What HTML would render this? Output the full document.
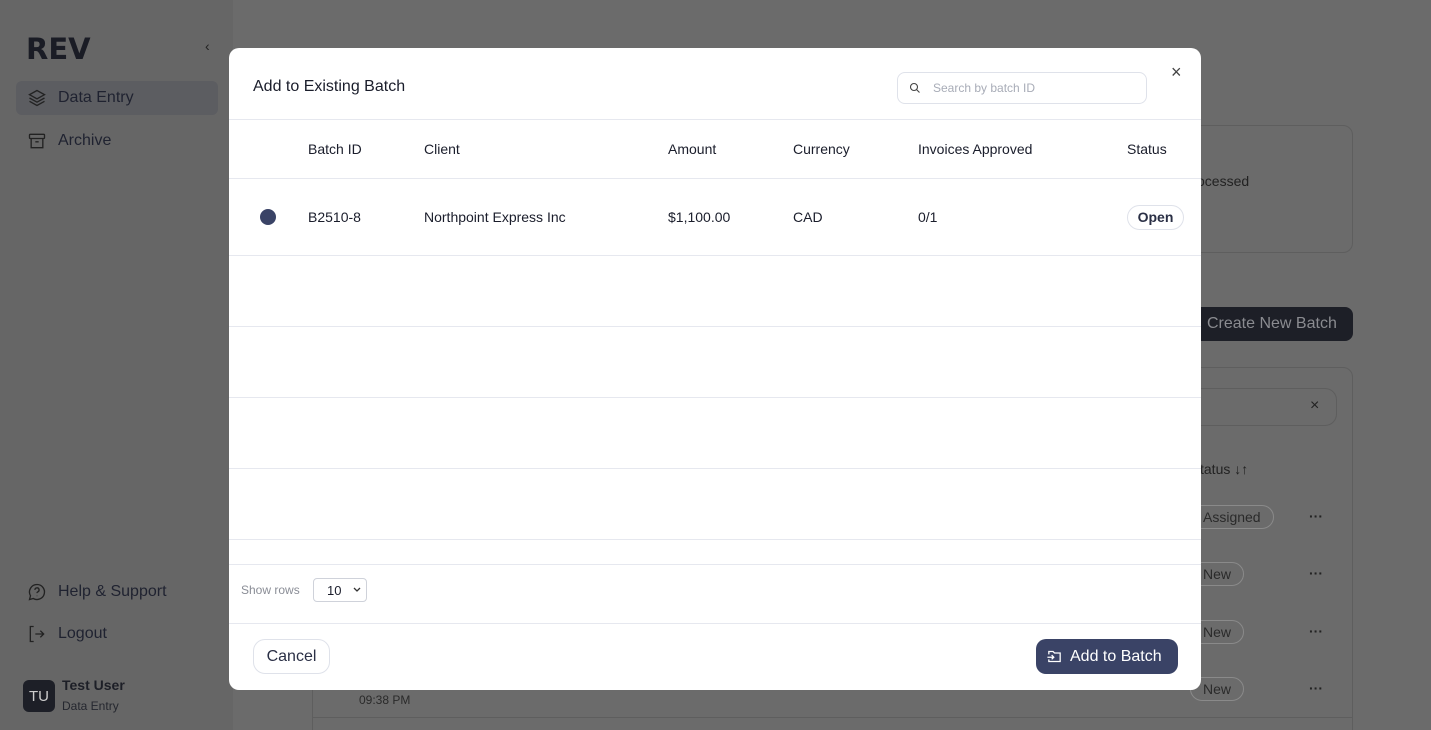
<!DOCTYPE html>
<html><head><meta charset="utf-8"><style>
*{box-sizing:border-box;margin:0;padding:0}
html,body{width:1431px;height:730px;overflow:hidden}
body{font-family:"Liberation Sans",Arial,sans-serif;background:#6b6b6b;position:relative;color:#1a1d2b}
.side{position:absolute;left:0;top:0;width:233px;height:730px;background:#666}
.abs{position:absolute}
.nav{position:absolute;left:16px;width:202px;height:34px;border-radius:6px;font-size:16px;color:#1f2230;display:flex;align-items:center;padding-left:42px}
.modal{position:absolute;left:229px;top:48px;width:972px;height:642px;background:#fff;border-radius:10px;overflow:hidden}
.hl{position:absolute;left:0;right:0;height:1px;background:#e6e8ef}
.th{position:absolute;top:93px;font-size:14px;color:#1a1d2b}
.td{position:absolute;top:161px;font-size:14px;color:#1a1d2b}
.pill{position:absolute;border:1px solid #8a8a8a;border-radius:14px;font-size:14px;color:#2a2a2a;padding:3px 12px}
</style></head><body>
<div class="side">
  <div class="abs" style="left:26px;top:32px;font-size:29px;font-weight:bold;letter-spacing:0px;color:#1a1c25;font-family:'DejaVu Sans',sans-serif">REV</div>
  <div class="abs" style="left:205px;top:38px;font-size:14px;color:#222">‹</div>
  <div class="nav" style="top:81px;background:#5c5d61">Data Entry</div>
  <svg class="abs" style="left:27px;top:88px" width="20" height="20" viewBox="0 0 24 24" fill="none" stroke="#222" stroke-width="1.6"><path d="M12 3 3 8l9 5 9-5z"/><path d="m3 12 9 5 9-5"/><path d="m3 16 9 5 9-5"/></svg>
  <div class="nav" style="top:124px">Archive</div>
  <svg class="abs" style="left:27px;top:131px" width="20" height="20" viewBox="0 0 24 24" fill="none" stroke="#222" stroke-width="1.6"><rect x="3" y="4" width="18" height="5" rx="1"/><path d="M5 9v11h14V9M10 13h4"/></svg>
  <div class="nav" style="top:575px">Help &amp; Support</div>
  <svg class="abs" style="left:27px;top:582px" width="20" height="20" viewBox="0 0 24 24" fill="none" stroke="#222" stroke-width="1.6"><path d="M12 3a9 9 0 1 1-4.5 16.8L3 21l1.2-4.5A9 9 0 0 1 12 3z"/><path d="M9.5 9.5a2.5 2.5 0 1 1 3.5 2.3c-.6.3-1 .8-1 1.5M12 16.5v.5"/></svg>
  <div class="nav" style="top:617px">Logout</div>
  <svg class="abs" style="left:27px;top:624px" width="20" height="20" viewBox="0 0 24 24" fill="none" stroke="#222" stroke-width="1.6"><path d="M8 3H4v18h4M10 12h10M16 8l4 4-4 4"/></svg>
  <div class="abs" style="left:23px;top:680px;width:32px;height:32px;border-radius:6px;background:#1d1f27;color:#ccc;font-size:15px;display:flex;align-items:center;justify-content:center">TU</div>
  <div class="abs" style="left:62px;top:677px;font-size:14px;font-weight:bold;color:#1d1f27">Test User</div>
  <div class="abs" style="left:62px;top:699px;font-size:12px;color:#25272f">Data Entry</div>
</div>
<div class="abs" style="left:1150px;top:125px;width:203px;height:128px;border:1px solid #5e5e5e;border-radius:10px"></div>
<div class="abs" style="left:1197px;top:173px;font-size:14px;color:#222">ocessed</div>
<div class="abs" style="left:1150px;top:307px;width:203px;height:34px;background:#1d1f27;border-radius:8px;color:#8a8b90;font-size:16px;padding:8px 0 0 57px">Create New Batch</div>
<div class="abs" style="left:312px;top:367px;width:1041px;height:380px;border:1px solid #5e5e5e;border-radius:10px"></div>
<div class="abs" style="left:1150px;top:388px;width:187px;height:38px;border:1px solid #5e5e5e;border-radius:12px"></div>
<div class="abs" style="left:1310px;top:397px;font-size:16px;color:#222">×</div>
<div class="abs" style="left:1200px;top:461px;font-size:14px;color:#222">tatus ↓↑</div>
<div class="pill" style="left:1190px;top:505px">Assigned</div>
<div class="pill" style="left:1190px;top:562px">New</div>
<div class="pill" style="left:1190px;top:620px">New</div>
<div class="pill" style="left:1190px;top:677px">New</div>
<div class="abs" style="left:1309px;top:508px;font-size:14px;font-weight:bold;color:#222">···</div>
<div class="abs" style="left:1309px;top:565px;font-size:14px;font-weight:bold;color:#222">···</div>
<div class="abs" style="left:1309px;top:623px;font-size:14px;font-weight:bold;color:#222">···</div>
<div class="abs" style="left:1309px;top:680px;font-size:14px;font-weight:bold;color:#222">···</div>
<div class="abs" style="left:359px;top:693px;font-size:12px;color:#2a2a2a">09:38 PM</div>
<div class="abs" style="left:312px;top:717px;width:1041px;height:1px;background:#5e5e5e"></div>
<div class="modal">
  <div class="abs" style="left:24px;top:30px;font-size:16px;color:#1a1d2b">Add to Existing Batch</div>
  <div class="abs" style="left:668px;top:24px;width:250px;height:32px;border:1px solid #dfe2ea;border-radius:8px"></div>
  <svg class="abs" style="left:680px;top:34px" width="12" height="12" viewBox="0 0 24 24" fill="none" stroke="#444" stroke-width="2.2"><circle cx="10" cy="10" r="7"/><path d="m15 15 6 6"/></svg>
  <div class="abs" style="left:704px;top:33px;font-size:12px;color:#a8acb7">Search by batch ID</div>
  <div class="abs" style="left:942px;top:14px;font-size:18px;color:#444">×</div>
  <div class="hl" style="top:71px"></div>
  <div class="th" style="left:79px">Batch ID</div>
  <div class="th" style="left:195px">Client</div>
  <div class="th" style="left:439px">Amount</div>
  <div class="th" style="left:564px">Currency</div>
  <div class="th" style="left:689px">Invoices Approved</div>
  <div class="th" style="left:898px">Status</div>
  <div class="hl" style="top:130px"></div>
  <div class="abs" style="left:31px;top:161px;width:16px;height:16px;border-radius:50%;background:#3a4366"></div>
  <div class="td" style="left:79px">B2510-8</div>
  <div class="td" style="left:195px">Northpoint Express Inc</div>
  <div class="td" style="left:439px">$1,100.00</div>
  <div class="td" style="left:564px">CAD</div>
  <div class="td" style="left:689px">0/1</div>
  <div class="abs" style="left:898px;top:157px;width:57px;height:25px;border:1px solid #dfe2ea;border-radius:13px;font-size:14px;font-weight:bold;color:#2a2f45;text-align:center;line-height:23px">Open</div>
  <div class="hl" style="top:207px"></div>
  <div class="hl" style="top:278px"></div>
  <div class="hl" style="top:349px"></div>
  <div class="hl" style="top:420px"></div>
  <div class="hl" style="top:491px"></div>
  <div class="hl" style="top:516px"></div>
  <div class="abs" style="left:12px;top:535px;font-size:12px;color:#8a8d96">Show rows</div>
  <div class="abs" style="left:84px;top:530px;width:54px;height:24px;border:1px solid #cfd2da;border-radius:4px;font-size:13px;padding:4px 0 0 13px">10</div>
  <svg class="abs" style="left:123px;top:538px" width="10" height="8" viewBox="0 0 10 8" fill="none" stroke="#333" stroke-width="1.3"><path d="m2 2 3 3 3-3"/></svg>
  <div class="hl" style="top:575px"></div>
  <div class="abs" style="left:24px;top:591px;width:77px;height:35px;border:1px solid #dfe2ea;border-radius:12px;font-size:16px;color:#2a2f45;text-align:center;line-height:33px">Cancel</div>
  <div class="abs" style="left:807px;top:591px;width:142px;height:35px;background:#3a4366;border-radius:10px;font-size:16px;color:#fff;line-height:35px;padding-left:34px">Add to Batch</div>
  <svg class="abs" style="left:817px;top:600px" width="17" height="17" viewBox="0 0 24 24" fill="none" stroke="#fff" stroke-width="1.8"><path d="M4 9V5h6l2 2h8v12H4v-3"/><path d="M2 13h9M8 10l3 3-3 3"/></svg>
</div>
</body></html>
